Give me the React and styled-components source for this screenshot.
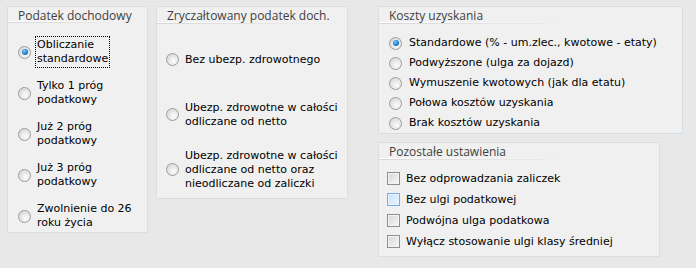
import styled, { createGlobalStyle } from 'styled-components';

const Global = createGlobalStyle`
    html, body {
        margin: 0;
        background: #e8e8e8;
    }
    body {
        font-family: "DejaVu Sans", Verdana, sans-serif;
        font-size: 11px;
        color: #000;
    }
`;

const Page = styled.div`
    display: flex;
    align-items: flex-start;
    padding: 6px 7px;
    width: 696px;
    height: 268px;
    box-sizing: border-box;
`;

const Column = styled.div`
    display: flex;
    flex-direction: column;
    align-items: flex-start;
    gap: 8px;
    margin-left: ${p => p.$gap || 0}px;
`;

const Panel = styled.div`
    box-sizing: border-box;
    width: ${p => p.$w}px;
    height: ${p => p.$h}px;
    background: #f0f0f0;
    border: 1px solid #d6dfe6;
    display: flex;
    flex-direction: column;
`;

const Header = styled.div`
    align-self: flex-start;
    min-width: ${p => p.$w}px;
    white-space: nowrap;
    height: 17px;
    padding: 1px 0 0 10px;
    box-sizing: border-box;
    font-family: "Open Sans", "Noto Sans", sans-serif;
    font-size: 12px;
    line-height: 15px;
    color: #3f3f3f;
    background:
        linear-gradient(to right, rgba(0,0,0,0.10), rgba(0,0,0,0.05) 60%, rgba(0,0,0,0)) left bottom / 100% 1px no-repeat,
        linear-gradient(to right, rgba(255,255,255,0.9), rgba(255,255,255,0)) left calc(100% - 1px) / 100% 1px no-repeat;
`;

const List = styled.div`
    display: flex;
    flex-direction: column;
    gap: ${p => p.$gap || 0}px;
    padding: ${p => p.$pad || '0'};
`;

const Item = styled.label`
    display: flex;
    align-items: center;
    gap: ${p => p.$gap || 6}px;
    height: ${p => p.$h ? `${p.$h}px` : 'auto'};
    line-height: 14px;
    white-space: nowrap;
`;

const Text = styled.span`
    padding: 1px 1px;
    border: 1px dotted ${p => p.$focus ? '#000' : 'transparent'};
`;

const Radio = styled.span`
    flex: none;
    position: relative;
    width: 13px;
    height: 13px;
    box-sizing: border-box;
    border-radius: 50%;
    border: 1px solid #9a9a9a;
    background: radial-gradient(circle at 60% 65%, #fdfdfd 0%, #e8e8e8 45%, #c8c8c8 100%);
    box-shadow: inset 0 0 1px rgba(255,255,255,0.9);

    &::after {
        content: '';
        display: ${p => p.$on ? 'block' : 'none'};
        position: absolute;
        left: 2.5px;
        top: 2.5px;
        width: 6px;
        height: 6px;
        border-radius: 50%;
        background: radial-gradient(circle at 40% 35%, #7fd0ff 0%, #2a8ad8 45%, #0b4a8c 100%);
    }
`;

const Check = styled.span`
    flex: none;
    width: 13px;
    height: 13px;
    box-sizing: border-box;
    border: 1px solid ${p => p.$hover ? '#76aee3' : '#8e8e8e'};
    background: ${p => p.$hover
        ? 'linear-gradient(135deg, #c4e2fb, #eaf6ff)'
        : 'linear-gradient(135deg, #d6d6d6, #f8f8f8)'};
    box-shadow: inset 0 0 0 1px ${p => p.$hover ? '#e6f3ff' : '#f4f4f4'};
`;

const tax = [
    ['Obliczanie', 'standardowe'],
    ['Tylko 1 próg', 'podatkowy'],
    ['Już 2 próg', 'podatkowy'],
    ['Już 3 próg', 'podatkowy'],
    ['Zwolnienie do 26', 'roku życia'],
];

const flat = [
    ['Bez ubezp. zdrowotnego'],
    ['Ubezp. zdrowotne w całości', 'odliczane od netto'],
    ['Ubezp. zdrowotne w całości', 'odliczane od netto oraz', 'nieodliczane od zaliczki'],
];

const costs = [
    'Standardowe (% - um.zlec., kwotowe - etaty)',
    'Podwyższone (ulga za dojazd)',
    'Wymuszenie kwotowych (jak dla etatu)',
    'Połowa kosztów uzyskania',
    'Brak kosztów uzyskania',
];

const other = [
    'Bez odprowadzania zaliczek',
    'Bez ulgi podatkowej',
    'Podwójna ulga podatkowa',
    'Wyłącz stosowanie ulgi klasy średniej',
];

function Lines({ lines }) {
    return lines.map((l, i) => <span key={i}>{l}{i < lines.length - 1 && <br />}</span>);
}

export default function App() {
    return (
        <>
            <Global />
            <Page>
                <Column>
                    <Panel $w={141} $h={227}>
                        <Header $w={124}>Podatek dochodowy</Header>
                        <List $gap={9} $pad="13px 0 0 10px">
                            {tax.map((t, i) => (
                                <Item key={i} $gap={4}>
                                    <Radio $on={i === 0} />
                                    <Text $focus={i === 0}><Lines lines={t} /></Text>
                                </Item>
                            ))}
                        </List>
                    </Panel>
                </Column>
                <Column $gap={8}>
                    <Panel $w={192} $h={193}>
                        <Header $w={135}>Zryczałtowany podatek doch.</Header>
                        <List $pad="8px 0 0 9px">
                            {flat.map((t, i) => (
                                <Item key={i} $h={55}>
                                    <Radio />
                                    <span><Lines lines={t} /></span>
                                </Item>
                            ))}
                        </List>
                    </Panel>
                </Column>
                <Column $gap={30}>
                    <Panel $w={305} $h={128}>
                        <Header $w={195}>Koszty uzyskania</Header>
                        <List $pad="9px 0 0 10px">
                            {costs.map((t, i) => (
                                <Item key={i} $h={20} $gap={7}>
                                    <Radio $on={i === 0} />
                                    <span>{t}</span>
                                </Item>
                            ))}
                        </List>
                    </Panel>
                    <Panel $w={282} $h={115}>
                        <Header $w={195}>Pozostałe ustawienia</Header>
                        <List $pad="8px 0 0 8px">
                            {other.map((t, i) => (
                                <Item key={i} $h={21}>
                                    <Check $hover={i === 1} />
                                    <span>{t}</span>
                                </Item>
                            ))}
                        </List>
                    </Panel>
                </Column>
            </Page>
        </>
    );
}
